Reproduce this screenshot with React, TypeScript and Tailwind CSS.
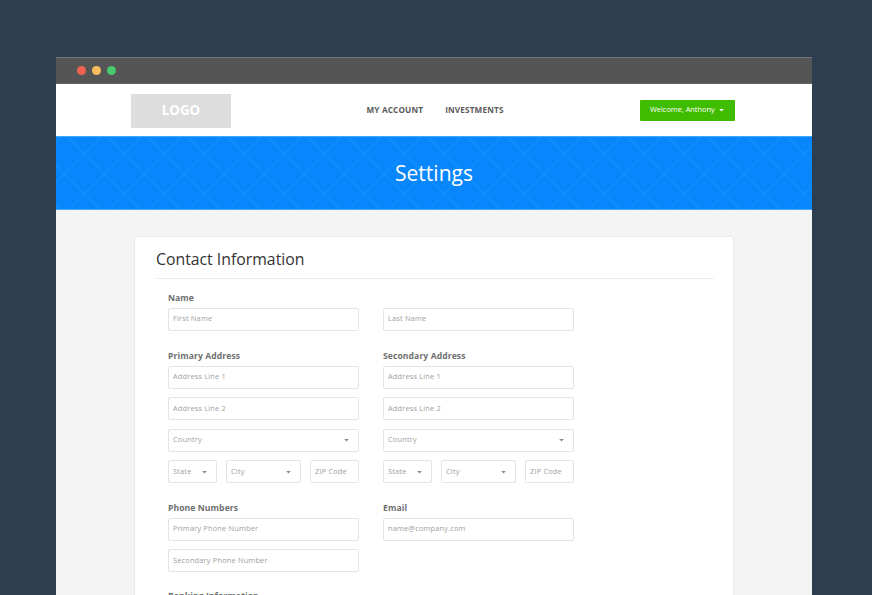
import React from "react";

function Caret({ className = "" }: { className?: string }) {
  return (
    <svg width="5" height="3" viewBox="0 0 5 3" className={className} fill="currentColor">
      <path d="M0.2 0H4.8L2.5 2.6Z" />
    </svg>
  );
}

function Field({ label, width = "w-[191px]", caret }: { label: string; width?: string; caret?: string }) {
  return (
    <div
      className={`flex h-[23px] shrink-0 items-center justify-between rounded-[2px] border border-[#e4e4e4] bg-white pl-1 pb-px text-[7.4px] tracking-[0.18px] text-[#a0a0a0] ${width}`}
    >
      <span className="whitespace-nowrap">{label}</span>
      {caret && <Caret className={`mt-0.5 text-[#888] ${caret}`} />}
    </div>
  );
}

function Label({ children }: { children: React.ReactNode }) {
  return <h3 className="h-[17px] pt-px text-[8.6px] leading-[13px] font-bold tracking-[0.08px] whitespace-nowrap text-[#707070]">{children}</h3>;
}

function Address({ title }: { title: string }) {
  return (
    <div className="w-[191px]">
      <Label>{title}</Label>
      <div className="flex flex-col gap-[8.4px]">
        <Field label="Address Line 1" />
        <Field label="Address Line 2" />
        <Field label="Country" caret="mr-[9px]" />
        <div className="flex justify-between">
          <Field label="State" width="w-[49px]" caret="mr-[9px]" />
          <Field label="City" width="w-[75px]" caret="mr-[9px]" />
          <Field label="ZIP Code" width="w-[49px]" />
        </div>
      </div>
    </div>
  );
}

const rings = [2.5, 5, 7.5, 10, 12.5, 15, 17.5];

function BannerTexture() {
  return (
    <svg className="absolute inset-0 h-full w-full" aria-hidden="true">
      <defs>
        <pattern id="weave" width="40" height="40" patternUnits="userSpaceOnUse" patternTransform="translate(28.5 -3)">
          <g fill="none" stroke="#006ee8" strokeWidth="0.8" opacity="0.5">
            {rings.map((r) => (
              <path key={r} d={`M20 ${20 - r}L${20 + r} 20L20 ${20 + r}L${20 - r} 20Z`} />
            ))}
            {rings.map((r) => (
              <path key={`c${r}`} d={`M${r} 0L0 ${r}M${40 - r} 0L40 ${r}M0 ${40 - r}L${r} 40M40 ${40 - r}L${40 - r} 40`} />
            ))}
          </g>
          <path d="M20 0L40 20L20 40L0 20Z" fill="none" stroke="#38a2ff" strokeWidth="1" strokeDasharray="1.4 1.4" opacity="0.35" />
        </pattern>
      </defs>
      <rect width="100%" height="100%" fill="url(#weave)" />
    </svg>
  );
}

export default function App() {
  return (
    <div className="h-[595px] w-[872px] overflow-hidden bg-[#2d3e50] pt-[57px] pl-14 font-['Open_Sans',sans-serif]">
      <div className="flex h-[538px] w-[756px] flex-col overflow-hidden rounded-tl-[1px] bg-[#f4f4f4]">
        <div className="flex h-[27px] shrink-0 items-center gap-[6px] border-t border-b border-t-[#777] border-b-[#666] bg-[#555] pl-[21px]">
          <i className="size-[9px] rounded-full bg-[#ee6450]" />
          <i className="size-[9px] rounded-full bg-[#fabd5e]" />
          <i className="size-[9px] rounded-full bg-[#48cb70]" />
        </div>

        <header className="flex h-[52px] shrink-0 items-center bg-white pl-[75px]">
          <div className="mt-[2px] flex h-[34px] w-[100px] items-center justify-center bg-[#ddd] text-[13.3px] font-bold text-white">LOGO</div>
          <nav className="ml-[135.5px] flex w-[273.5px] gap-[22px] text-[8.2px] font-bold tracking-[0.15px] whitespace-nowrap text-[#5a5a5a]">
            <span>MY ACCOUNT</span>
            <span>INVESTMENTS</span>
          </nav>
          <div className="flex h-[21px] w-[95px] items-center rounded-[1px] bg-[#3fbc00] pl-[10px] text-[7.4px] font-medium whitespace-nowrap text-white">
            Welcome, Anthony
            <Caret className="ml-[4px]" />
          </div>
        </header>

        <div className="relative h-[74px] shrink-0 border-t border-b border-[#45a6ff] bg-[#0a8bff]">
          <BannerTexture />
          <h1 className="relative text-center text-[21px] leading-[72px] text-white">Settings</h1>
        </div>

        <main className="mt-[26px] ml-[78px] h-[420px] w-[600px] shrink-0 rounded-t-[3px] border border-[#e9e9e9] bg-white pr-[19px] pl-[20px] pt-[10px]">
          <h2 className="h-[32px] border-b border-[#eee] pl-px text-[15.8px] leading-[25px] text-[#333]">Contact Information</h2>
          <div className="pt-[12px] pl-[13px]">
            <Label>Name</Label>
            <div className="flex gap-[24px]">
              <Field label="First Name" />
              <Field label="Last Name" />
            </div>
            <div className="mt-[18px] flex gap-[24px]">
              <Address title="Primary Address" />
              <Address title="Secondary Address" />
            </div>
            <div className="mt-[17.5px] flex gap-[24px]">
              <div>
                <Label>Phone Numbers</Label>
                <div className="flex flex-col gap-[8.4px]">
                  <Field label="Primary Phone Number" />
                  <Field label="Secondary Phone Number" />
                </div>
              </div>
              <div>
                <Label>Email</Label>
                <Field label="name@company.com" />
              </div>
            </div>
            <div className="mt-[16.5px]">
              <Label>Banking Information</Label>
            </div>
          </div>
        </main>
      </div>
    </div>
  );
}
